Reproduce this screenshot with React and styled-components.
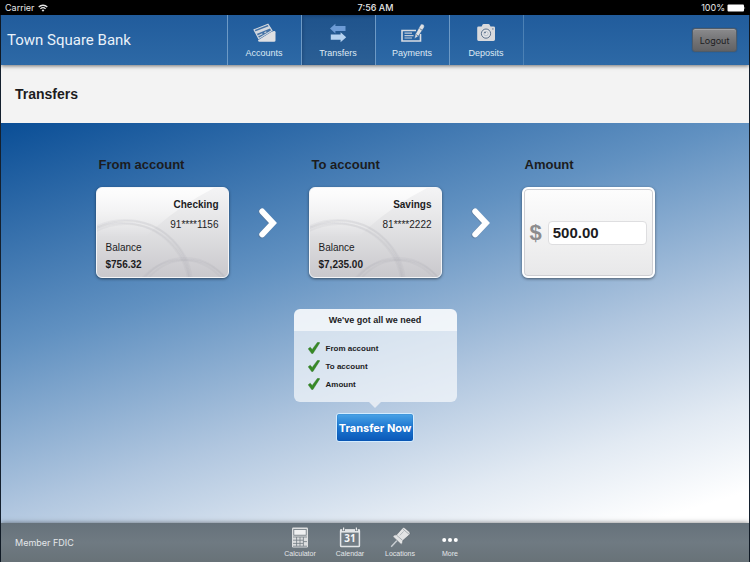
import React, { useState } from 'react';
import styled, { createGlobalStyle } from 'styled-components';

const GlobalStyle = createGlobalStyle`
  * {
    box-sizing: border-box;
  }

  body {
    margin: 0;
    background: #000;
    color: #1c1c1e;
    font-family: 'Liberation Sans', Arial, sans-serif;
  }

  button, input {
    font-family: inherit;
    color: inherit;
  }
`;

const Page = styled.div`
  min-height: 100vh;
  display: flex;
  flex-direction: column;
`;

const StatusBar = styled.div`
  display: grid;
  grid-template-columns: 1fr auto 1fr;
  align-items: center;
  height: 15px;
  padding: 0 4px 0 5px;
  background: #000;
  color: #e8e8e8;
  font-family: Inter, sans-serif;
  font-size: 9px;
  line-height: 15px;
`;

const StatusGroup = styled.div`
  display: flex;
  align-items: center;
  justify-content: ${props => props.$end ? 'flex-end' : 'flex-start'};
  gap: ${props => props.$end ? '2px' : '3px'};
`;

const Clock = styled.span`
  font-weight: 500;
`;

const Screen = styled.div`
  flex: 1;
  display: flex;
  flex-direction: column;
  border: solid #14202e;
  border-width: 0 1px;
`;

const Header = styled.header`
  position: relative;
  display: grid;
  grid-template-columns: 1fr auto 1fr;
  align-items: center;
  height: 50px;
  background: linear-gradient(#215c9c, #2d69a6);
  box-shadow: 0 1px 4px rgba(0, 0, 0, 0.55);
`;

const Brand = styled.div`
  padding-left: 6px;
  color: #e9f1f9;
  font-family: Roboto, sans-serif;
  font-size: 15px;
`;

const MainNav = styled.nav`
  display: flex;
  align-self: stretch;
  border-left: 1px solid #6d9ac6;
`;

const NavItem = styled.a`
  display: flex;
  flex-direction: column;
  align-items: center;
  gap: 4px;
  width: 74px;
  padding-top: 8px;
  border-right: 1px solid #6d9ac6;
  background: ${props => props.$active ? 'linear-gradient(#1f538c, #2b5f95)' : 'transparent'};
  box-shadow: ${props => props.$active ? 'inset 1px 1px 3px rgba(0, 20, 50, 0.25)' : 'none'};
  color: #dfe9f3;
  font-size: 9px;
  line-height: 12px;
  text-decoration: none;

  &:last-child {
    border-right-color: #4c81b5;
  }
`;

const LogoutButton = styled.button`
  justify-self: end;
  width: 45px;
  height: 24px;
  margin-right: 12px;
  padding: 0;
  border: 1px solid #4f5b68;
  border-radius: 3px;
  background: linear-gradient(#8b8b8d, #747476 50%, #626264);
  box-shadow: 0 0 1px rgba(40, 50, 60, 0.8), inset 0 1px 0 #a3a3a5;
  color: #1d1d1f;
  font-family: Inter, sans-serif;
  font-size: 9px;
`;

const TitleBar = styled.div`
  display: flex;
  align-items: center;
  height: 58px;
  padding: 0 14px;
  background: #f3f3f3;
`;

const Title = styled.h1`
  margin: 0;
  font-size: 14px;
  font-weight: 700;
`;

const Main = styled.main`
  flex: 1;
  display: flex;
  flex-direction: column;
  align-items: center;
  padding: 34px 16px;
  background: linear-gradient(163deg, #0a4e96 0%, #6191c1 36%, #b0c6df 62%, #e2eaf3 81%, #fff 95%);
`;

const Steps = styled.div`
  display: flex;
  justify-content: center;
`;

const Step = styled.div`
  width: 133px;
`;

const StepLabel = styled.label`
  display: block;
  margin: 0 0 14px 3px;
  font-size: 13px;
  font-weight: 700;
  line-height: 16px;
`;

const StepArrow = styled.div`
  display: flex;
  justify-content: center;
  width: 80px;
  padding-top: 48px;
`;

const AccountCard = styled.button`
  position: relative;
  display: flex;
  flex-direction: column;
  width: 100%;
  height: 91px;
  padding: 8px 9px;
  border: 1px solid #f4f5f7;
  border-radius: 6px;
  background: linear-gradient(#f4f4f5, #e2e2e4 45%, #c9c8cc);
  box-shadow: 0 1px 3px rgba(0, 0, 0, 0.5);
  font-size: 10px;
  line-height: 17px;
  overflow: hidden;
`;

const CardTexture = styled.svg`
  position: absolute;
  inset: 0;
`;

const CardLine = styled.span`
  position: relative;
  align-self: ${props => props.$end ? 'flex-end' : 'flex-start'};
  margin-bottom: ${props => props.$gap || 0}px;
  font-weight: ${props => props.$bold ? 700 : 400};
`;

const AmountCard = styled.div`
  display: flex;
  align-items: center;
  gap: 6px;
  height: 91px;
  padding: 0 6px;
  border: 2px solid #fff;
  border-radius: 6px;
  background: linear-gradient(#fdfdfd, #e8e8e9);
  box-shadow: 0 1px 3px rgba(0, 0, 0, 0.5), inset 0 0 0 1px #cfcfd3;
`;

const Currency = styled.span`
  color: #8c8c8e;
  font-size: 22px;
  font-weight: 700;
`;

const AmountInput = styled.input`
  flex: 1;
  min-width: 0;
  height: 24px;
  padding: 0 4px;
  border: 1px solid #dedee0;
  border-radius: 4px;
  background: #fff;
  font-size: 15px;
  font-weight: 700;
`;

const Checklist = styled.section`
  position: relative;
  width: 163px;
  margin: 31px 0 11px;

  &::after {
    content: '';
    position: absolute;
    top: 100%;
    left: 50%;
    margin-left: -6px;
    border: 6px solid transparent;
    border-top-color: #e4eaf2;
    border-bottom: 0;
  }
`;

const ChecklistTitle = styled.h2`
  margin: 0;
  border-radius: 6px 6px 0 0;
  background: rgba(255, 255, 255, 0.86);
  font-size: 9px;
  line-height: 22px;
  text-align: center;
`;

const ChecklistItems = styled.ul`
  margin: 0;
  padding: 8px 14px 9px;
  border-radius: 0 0 6px 6px;
  background: rgba(255, 255, 255, 0.64);
  list-style: none;
`;

const ChecklistItem = styled.li`
  display: flex;
  align-items: center;
  gap: 6px;
  height: 18px;
  font-size: 8px;
  font-weight: 700;
`;

const SubmitButton = styled.button`
  height: 29px;
  width: 78px;
  padding: 0;
  border: 1px solid #d3ecff;
  border-radius: 3px;
  background: linear-gradient(#4aa3e6, #1c76d0 50%, #0a58b8);
  box-shadow: inset 0 0 1px #053f8c;
  color: #fff;
  font-family: Inter, sans-serif;
  font-size: 11px;
  font-weight: 700;
  white-space: nowrap;
`;

const Footer = styled.footer`
  position: relative;
  display: grid;
  grid-template-columns: 1fr auto 1fr;
  align-items: center;
  height: 39px;
  background: linear-gradient(#66727b, #6f7a82 50%, #687278);
  box-shadow: 0 0 5px rgba(0, 0, 0, 0.5);
  color: #e4e7ea;
`;

const Legal = styled.span`
  padding-left: 14px;
  font-family: Inter, sans-serif;
  font-size: 9px;
`;

const FooterNav = styled.nav`
  display: flex;
`;

const FooterLink = styled.a`
  display: flex;
  flex-direction: column;
  align-items: center;
  gap: 1px;
  width: 50px;
  color: #e4e7ea;
  font-size: 7px;
  line-height: 10px;
  text-decoration: none;
`;

const WifiIcon = () => (
  <svg width="10" height="8" viewBox="0 0 10 8" fill="none" stroke="#e8e8e8" strokeWidth="1.3">
    <path d="M0.7 3 A6.2 6.2 0 0 1 9.3 3" />
    <path d="M2.4 4.9 A3.8 3.8 0 0 1 7.6 4.9" />
    <path d="M5 7.8 L3.6 6.3 A2 2 0 0 1 6.4 6.3 Z" fill="#e8e8e8" stroke="none" />
  </svg>
);

const BatteryIcon = () => (
  <svg width="19" height="8" viewBox="0 0 19 8" fill="#fff">
    <rect x="0.5" y="0.5" width="16.5" height="7" rx="1" />
    <path d="M17.6 2.6 Q18.8 4 17.6 5.4 Z" />
  </svg>
);

const AccountsIcon = () => (
  <svg width="24" height="20" viewBox="0 0 24 20">
    <path d="M10 11 L22 8 Q23.5 7.8 23.5 9.2 V17.4 Q23.5 18.8 22 18.8 H7.5 Q6.2 18.8 6 17.4 Z" fill="#dfe0e3" />
    <path d="M1.6 6.2 L15.6 0.5 Q17 0.1 17.7 1.3 L20.6 6.4 Q21.1 7.8 20 8.4 L7.6 16.2 Q6.2 16.9 5.4 15.6 L0.9 8.2 Q0.4 6.8 1.6 6.2 Z" fill="#255f9e" />
    <path d="M2 6.8 L16 1.2 L20 7.6 L6.8 15.6 Z" fill="#7f97b5" fillOpacity="0.35" stroke="#d3d8df" strokeWidth="1.2" strokeLinejoin="round" />
    <path d="M3 8.6 L17.2 2.9 L18.6 5.2 L4.5 11 Z" fill="#d3d8df" />
    <path d="M6.2 12.8 L10.4 10.8 M12.4 9.8 L14.4 8.8" stroke="#d3d8df" strokeWidth="1.1" />
  </svg>
);

const TransfersIcon = () => (
  <svg width="24" height="20" viewBox="0 0 24 20">
    <path d="M4 5.6 L9.4 0.8 V3 H19.5 V8 H9.4 V10.4 Z" fill="#6d9bd6" />
    <path d="M20.2 14.2 L14.6 9.2 V11.6 H4.8 V16.8 H14.6 V19.2 Z" fill="#b5d2f1" />
  </svg>
);

const PaymentsIcon = () => (
  <svg width="26" height="20" viewBox="0 0 26 20">
    <path d="M17 7.5 H3 V18 H21.5 V11" fill="none" stroke="#d9dde3" strokeWidth="1.6" />
    <path d="M5.5 10.2 H13 M5.5 12.6 H14.5 M5.5 15 H13" stroke="#c2ccd9" strokeWidth="1.2" />
    <path d="M15.4 15.8 L16.4 11.2 L21.2 2.4 Q22.5 0.4 24.4 1.4 Q26 2.6 25 4.5 L19.6 13 Z" fill="#dfe1e4" stroke="#235c9b" strokeWidth="0.5" />
    <path d="M17.2 11.6 L19 12.8 M20.6 5.6 L23.2 7.2" stroke="#506983" strokeWidth="0.8" />
  </svg>
);

const DepositsIcon = () => (
  <svg width="24" height="20" viewBox="0 0 24 20">
    <path d="M7.6 3.4 L8.6 1.6 Q8.9 1 9.6 1 H14.5 Q15.2 1 15.5 1.6 L16.5 3.4 H19.5 Q21 3.4 21 4.8 V16.6 Q21 18 19.5 18 H4.6 Q3.2 18 3.2 16.6 V4.8 Q3.2 3.4 4.6 3.4 Z" fill="#d9dadd" />
    <circle cx="12" cy="10.6" r="4.6" fill="#e4e5e8" stroke="#4b6380" strokeWidth="0.9" />
    <circle cx="12" cy="10.6" r="2.2" fill="none" stroke="#a9b3bf" strokeWidth="0.7" />
    <circle cx="11" cy="9.6" r="0.8" fill="#4b6380" />
    <rect x="18.2" y="5.4" width="1.3" height="1.1" fill="#5d728b" />
  </svg>
);

const ChevronIcon = () => (
  <svg width="24" height="36" viewBox="0 0 24 36" fill="none" strokeLinecap="round" strokeLinejoin="miter">
    <path d="M4.6 6.6 L15.4 18.4 L4.6 30.2" stroke="#5a7391" strokeOpacity="0.6" strokeWidth="6.4" />
    <path d="M5.2 6.4 L16 18 L5.2 29.4" stroke="#fff" strokeWidth="5.8" />
  </svg>
);

const CheckIcon = () => (
  <svg width="12" height="12" viewBox="0 0 12 12">
    <path d="M0.2 6.8 L2.2 5.2 L4.2 7.4 L9.4 0.4 Q10.8 -0.1 11.8 0.7 L4.9 11.6 H3.7 Z" fill="#378a26" stroke="#23691a" strokeWidth="0.4" />
  </svg>
);

const CalculatorIcon = () => (
  <svg width="18" height="21" viewBox="0 0 18 21">
    <rect x="1" y="0.6" width="16" height="19.8" rx="1.2" fill="#dcdedf" />
    <rect x="2.8" y="2.4" width="12.4" height="5.8" fill="#eff0f1" stroke="#6b757c" strokeWidth="0.8" />
    <path d="M2 10 H16 M2 13.2 H12.2 M2 16.4 H12.2 M2 19.2 H16 M5.6 10 V19.2 M9 10 V19.2 M12.4 10 V19.2 M12.4 14.6 H16" stroke="#717b82" strokeWidth="0.8" />
  </svg>
);

const CalendarIcon = () => (
  <svg width="22" height="21" viewBox="0 0 22 21">
    <rect x="1.6" y="3" width="18.8" height="16.6" rx="0.8" fill="#727d85" stroke="#e2e5e7" strokeWidth="1.5" />
    <path d="M1 2.4 H21 V5.6 H1 Z" fill="#e2e5e7" />
    <path d="M4.6 0.4 V4 M17.4 0.4 V4" stroke="#5f6a72" strokeWidth="2.6" />
    <path d="M4.6 0.4 V3.6 M17.4 0.4 V3.6" stroke="#eceeef" strokeWidth="1.3" />
    <text x="11" y="15.2" textAnchor="middle" fill="#f5f6f7" fontFamily="Noto Sans, sans-serif" fontSize="10" fontWeight="700">31</text>
  </svg>
);

const PinIcon = () => (
  <svg width="22" height="21" viewBox="0 0 22 21">
    <path d="M8 13.6 L2.2 19.8" stroke="#c9ced2" strokeWidth="1.4" />
    <path d="M3.8 9.4 Q5.6 7.4 7.4 8 L13.2 1.4 Q14.4 0 15.8 1 L20.6 5 Q21.6 6.2 20.6 7.6 L13.8 13.6 Q14 15.8 12.2 17.4 Z" fill="#e3e4e5" stroke="#566169" strokeWidth="0.5" />
    <path d="M7.6 8.2 L13.6 13.4 M14 2.2 L20 7.2" stroke="#8d959b" strokeWidth="0.7" />
    <path d="M10.8 8.4 L14.6 4.4" stroke="#b3b9bd" strokeWidth="1" />
  </svg>
);

const MoreIcon = () => (
  <svg width="18" height="21" viewBox="0 0 18 21" fill="#fff">
    <circle cx="3.2" cy="13" r="2" />
    <circle cx="9" cy="13" r="2" />
    <circle cx="14.8" cy="13" r="2" />
  </svg>
);

const navItems = [
  { label: 'Accounts', Icon: AccountsIcon },
  { label: 'Transfers', Icon: TransfersIcon, active: true },
  { label: 'Payments', Icon: PaymentsIcon },
  { label: 'Deposits', Icon: DepositsIcon },
];

const footerItems = [
  { label: 'Calculator', Icon: CalculatorIcon },
  { label: 'Calendar', Icon: CalendarIcon },
  { label: 'Locations', Icon: PinIcon },
  { label: 'More', Icon: MoreIcon },
];

const accounts = {
  from: { name: 'Checking', number: '91****1156', balance: '$756.32' },
  to: { name: 'Savings', number: '81****2222', balance: '$7,235.00' },
};

const AccountStep = ({ id, label, account }) => (
  <Step>
    <StepLabel htmlFor={id}>{label}</StepLabel>
    <AccountCard id={id} type="button">
      <CardTexture width="131" height="89" viewBox="0 0 131 89" fill="none">
        <defs>
          <linearGradient id={`${id}-gloss`} x1="0" y1="0" x2="0" y2="1">
            <stop offset="0" stopColor="#fff" stopOpacity="0.85" />
            <stop offset="0.55" stopColor="#fff" stopOpacity="0" />
          </linearGradient>
        </defs>
        <path d="M0 0 H117 Q84 17 58 40 T18 89 H0 Z" fill={`url(#${id}-gloss)`} />
        <g stroke="#9c9ca4" strokeOpacity="0.1" strokeWidth="2">
          <circle cx="30" cy="98" r="65" />
          <circle cx="28" cy="97" r="65" />
          <circle cx="29" cy="100" r="64" />
          <circle cx="25" cy="102" r="67" />
          <circle cx="88" cy="120" r="50" />
          <circle cx="90" cy="122" r="50" />
          <circle cx="85" cy="124" r="52" />
        </g>
      </CardTexture>
      <CardLine $end $bold $gap={3}>{account.name}</CardLine>
      <CardLine $end $gap={6}>{account.number}</CardLine>
      <CardLine>Balance</CardLine>
      <CardLine $bold>{account.balance}</CardLine>
    </AccountCard>
  </Step>
);

const App = () => {
  const [amount, setAmount] = useState('500.00');

  return (
    <>
      <GlobalStyle />
      <Page>
        <StatusBar>
          <StatusGroup>
            <span>Carrier</span>
            <WifiIcon />
          </StatusGroup>
          <Clock>7:56 AM</Clock>
          <StatusGroup $end>
            <span>100%</span>
            <BatteryIcon />
          </StatusGroup>
        </StatusBar>
        <Screen>
          <Header>
            <Brand>Town Square Bank</Brand>
            <MainNav>
              {navItems.map(({ label, Icon, active }) => (
                <NavItem key={label} href="#" $active={active}>
                  <Icon />
                  {label}
                </NavItem>
              ))}
            </MainNav>
            <LogoutButton type="button">Logout</LogoutButton>
          </Header>
          <TitleBar>
            <Title>Transfers</Title>
          </TitleBar>
          <Main>
            <Steps>
              <AccountStep id="from" label="From account" account={accounts.from} />
              <StepArrow><ChevronIcon /></StepArrow>
              <AccountStep id="to" label="To account" account={accounts.to} />
              <StepArrow><ChevronIcon /></StepArrow>
              <Step>
                <StepLabel htmlFor="amount">Amount</StepLabel>
                <AmountCard>
                  <Currency>$</Currency>
                  <AmountInput
                    id="amount"
                    type="text"
                    value={amount}
                    onChange={(e) => setAmount(e.target.value)}
                  />
                </AmountCard>
              </Step>
            </Steps>
            <Checklist>
              <ChecklistTitle>We've got all we need</ChecklistTitle>
              <ChecklistItems>
                {['From account', 'To account', 'Amount'].map((item) => (
                  <ChecklistItem key={item}>
                    <CheckIcon />
                    {item}
                  </ChecklistItem>
                ))}
              </ChecklistItems>
            </Checklist>
            <SubmitButton type="button">Transfer Now</SubmitButton>
          </Main>
          <Footer>
            <Legal>Member FDIC</Legal>
            <FooterNav>
              {footerItems.map(({ label, Icon }) => (
                <FooterLink key={label} href="#">
                  <Icon />
                  {label}
                </FooterLink>
              ))}
            </FooterNav>
          </Footer>
        </Screen>
      </Page>
    </>
  );
};

export default App;
